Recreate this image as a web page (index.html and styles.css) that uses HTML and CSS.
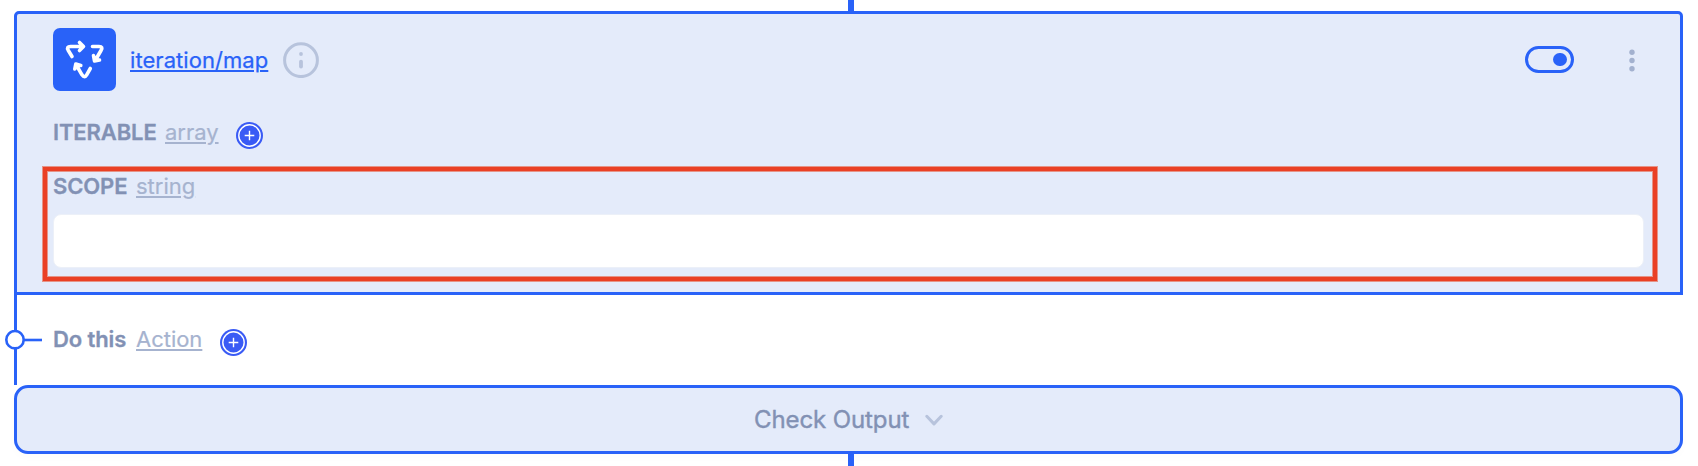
FILE: index.html
```html
<!DOCTYPE html>
<html lang="en">
<head>
<meta charset="utf-8">
<title>iteration/map</title>
<link rel="stylesheet" href="styles.css">
</head>
<body>
<main class="flow">
  <div class="connector connector-top"></div>
  <section class="card">
    <header class="card-header">
      <div class="tile">
        <svg width="63" height="63" viewBox="0 0 63 63" fill="none" stroke="#fff" stroke-width="3.6" stroke-linecap="round" stroke-linejoin="round">
          <path d="M19 28.5 15.2 22.2Q13.2 18.5 17.5 18.5H30M26.5 14.5 30.5 18.5 26.5 22.5"/>
          <path d="M39.5 18.5H46Q50.5 18.5 48 22.5L42.8 31.5M40.5 27.5 41.5 33 46.5 32"/>
          <path d="M37.3 40.5 33.7 46.8Q31.5 50.5 29 46.8L23.3 37M21.8 41 22.8 36 27.8 37.4"/>
        </svg>
      </div>
      <a class="name">iteration/map</a>
      <svg class="info" width="36" height="36" viewBox="0 0 36 36" fill="none" stroke="#b7c3dc">
        <circle cx="18" cy="18.2" r="16.4" stroke-width="3"/>
        <path d="M18 19.6V24.6" stroke-width="3.8" stroke-linecap="round"/>
        <circle cx="18" cy="12" r="1.9" fill="#b7c3dc" stroke="none"/>
      </svg>
      <div class="toggle"><span class="knob"></span></div>
      <svg class="more" width="6" height="24" viewBox="0 0 6 24" fill="#a3b1cf">
        <circle cx="3" cy="4.2" r="2.7"/><circle cx="3" cy="12.5" r="2.7"/><circle cx="3" cy="20.7" r="2.7"/>
      </svg>
    </header>
    <div class="row iterable">
      <span class="label">ITERABLE</span>
      <a class="type">array</a>
      <svg class="plus" width="27" height="27" viewBox="0 0 27 27"><circle cx="13.5" cy="13.5" r="13.5" fill="#3a5bf5"/><circle cx="13.5" cy="13.5" r="10.7" fill="none" stroke="#fff" stroke-width="1.4"/><path d="M13.5 8.7V18.3M8.7 13.5H18.3" stroke="#fff" stroke-width="1.4"/></svg>
    </div>
    <div class="highlight">
      <div class="row">
        <span class="label scope-label">SCOPE</span>
        <a class="type">string</a>
      </div>
      <div class="field"></div>
    </div>
  </section>
  <section class="branch">
    <svg class="port" width="37" height="20" viewBox="0 0 37 20"><path d="M19 10H37" stroke="#2962f8" stroke-width="2.6"/><circle cx="10" cy="9.7" r="8.7" fill="#fff" stroke="#2962f8" stroke-width="2.6"/></svg>
    <div class="row">
      <span class="label action-label">Do this</span>
      <a class="type action-type">Action</a>
      <svg class="plus" width="27" height="27" viewBox="0 0 27 27"><circle cx="13.5" cy="13.5" r="13.5" fill="#3a5bf5"/><circle cx="13.5" cy="13.5" r="10.7" fill="none" stroke="#fff" stroke-width="1.4"/><path d="M13.5 8.7V18.3M8.7 13.5H18.3" stroke="#fff" stroke-width="1.4"/></svg>
    </div>
  </section>
  <div class="output">
    <span class="output-text">Check Output</span>
    <svg width="18" height="12" viewBox="0 0 18 12" fill="none" stroke="#b7c3dc" stroke-width="3" stroke-linecap="round" stroke-linejoin="round"><path d="M1.8 2.3 9 9.9 16.2 2.3"/></svg>
  </div>
  <div class="connector connector-bottom"></div>
</main>
</body>
</html>
```
FILE: styles.css
```css
* { box-sizing: border-box; }
body { margin: 0; background: #fff; font-family: Inter, sans-serif; font-size: 22px; overflow: hidden; }
.flow { width: 1698px; height: 466px; padding: 0 15px 0 14px; display: flex; flex-direction: column; }
.flow svg { display: block; flex: none; }
.connector { width: 6px; margin-left: 834px; background: #2962f8; }
.connector-top { height: 11px; }
.connector-bottom { height: 12px; }
.card { height: 284px; border: 3px solid #2962f8; border-radius: 5px 5px 0 0; background: #e4ebfa; padding: 14px 23px 0 25px; }
.card-header { display: flex; align-items: center; height: 63px; padding: 0 22px 0 11px; }
.tile { width: 63px; height: 63px; border-radius: 7px; background: #2962f8; }
.name { margin-left: 14px; width: 138px; color: #2962f8; white-space: nowrap; letter-spacing: .06px; -webkit-text-stroke: .25px; text-decoration: underline; text-decoration-thickness: 2px; text-underline-offset: 2px; }
.info { margin-left: 15px; }
.toggle { width: 49px; height: 27px; border: 3px solid #2962f8; border-radius: 14px; margin-left: auto; display: flex; align-items: center; justify-content: flex-end; padding-right: 4.3px; }
.knob { width: 13.5px; height: 13.5px; border-radius: 50%; background: #2962f8; }
.more { margin-left: 55px; }
.row { display: flex; align-items: center; height: 27px; white-space: nowrap; }
.iterable { margin-top: 27px; padding-left: 11px; }
.label { width: 102px; color: #8291b4; font-weight: 600; letter-spacing: -.12px; -webkit-text-stroke: .3px; }
.scope-label, .action-label { width: 73px; }
.type { margin-left: 10px; width: 52px; color: #a6b3cf; letter-spacing: -.02px; -webkit-text-stroke: .2px; text-decoration: underline; text-decoration-thickness: 2px; text-underline-offset: 2px; }
.action-type { width: 66px; }
.plus { margin-left: 18px; position: relative; top: 4px; }
.iterable .plus { margin-left: 19px; }
.branch .plus { top: 3px; }
.highlight { margin-top: 22px; height: 114px; border: 4px solid #ea4025; box-shadow: 0 0 0 1px #e59488, inset 0 0 0 1px #e59488; padding: 1px 9px 0 6px; margin-left: 1px; }
.field { height: 54px; margin-top: 15px; border: 1px solid #ecf0f8; border-radius: 8px; background: #fff; }
.branch { height: 90px; display: flex; align-items: center; border-left: 3px solid #2962f8; }
.branch .row { margin-bottom: 2px; }
.port { margin-left: -12px; margin-right: 11px; }
.output { height: 69px; border: 3px solid #2962f8; border-radius: 14px; background: #e4ebfa; box-shadow: 0 4px 8px rgba(0,0,0,.015); display: flex; align-items: center; padding-left: 737px; gap: 17px; color: #8291b4; font-size: 24px; }
.output-text { width: 154px; white-space: nowrap; letter-spacing: -.1px; -webkit-text-stroke: .4px; }
```
